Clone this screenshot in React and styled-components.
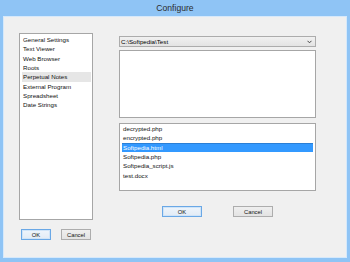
import React from "react";
import styled, { createGlobalStyle } from "styled-components";

const Global = createGlobalStyle`
  html, body { margin: 0; padding: 0; background: #8fc4f5; }
  body { font-family: "Liberation Sans", Arial, sans-serif; }
  * { box-sizing: border-box; }
`;

const Window = styled.div`
  width: 350px;
  height: 262px;
  display: flex;
  flex-direction: column;
  background: #8fc4f5;
  padding: 0 4px 5px 4px;
`;

const TitleBar = styled.div`
  height: 17px;
  flex: none;
  display: flex;
  align-items: center;
  justify-content: center;
  font-size: 8.6px;
  color: #2b2b2b;
  padding-bottom: 1px;
`;

const Content = styled.div`
  flex: 1;
  background: #f0f0f0;
  box-shadow: 0 0 0 1px #d6e9fb;
  display: flex;
  padding: 16px 0 0 15px;
  font-size: 6.2px;
  color: #000;
`;

const LeftCol = styled.div`
  width: 74px;
  display: flex;
  flex-direction: column;
  gap: 9px;
`;

const ListBox = styled.div`
  background: #fff;
  border: 1px solid #a6a6a6;
  height: ${(p) => p.$h}px;
  padding: ${(p) => p.$pad};
  overflow: hidden;
`;

const Item = styled.div`
  height: 9.33px;
  line-height: 9.33px;
  padding-left: 1px;
  white-space: nowrap;
  background: ${(p) => (p.$sel === "active" ? "#3399ff" : p.$sel === "inactive" ? "#e6e6e6" : "transparent")};
  color: ${(p) => (p.$sel === "active" ? "#fff" : "#111")};
  box-shadow: ${(p) => (p.$sel === "active" ? "inset 0 1px 0 #2a7fd6" : "none")};
`;

const ButtonRow = styled.div`
  display: flex;
  gap: ${(p) => p.$gap}px;
  padding-left: ${(p) => p.$left}px;
`;

const Button = styled.div`
  width: 30px;
  height: 11px;
  display: flex;
  align-items: center;
  justify-content: center;
  font-size: 5.8px;
  color: #111;
  border: 1px solid ${(p) => (p.$default ? "#6aa8e6" : "#adadad")};
  background: ${(p) =>
    p.$default
      ? "linear-gradient(#eef5fc, #e2ebf5)"
      : "linear-gradient(#efefef, #e3e3e3)"};
  box-shadow: ${(p) => (p.$default ? "inset 0 0 0 1px #cfe4f8" : "none")};
`;

const WideButton = styled(Button)`
  width: 40px;
`;

const RightCol = styled.div`
  width: 197px;
  margin-left: 26px;
  display: flex;
  flex-direction: column;
  padding-top: 3px;
`;

const Combo = styled.div`
  height: 11px;
  border: 1px solid #acacac;
  background: linear-gradient(#f1f1f1, #e3e3e3);
  display: flex;
  align-items: center;
  justify-content: space-between;
  padding: 0 3px 0 1px;
  margin-bottom: 3px;
`;

const Memo = styled.div`
  height: 68px;
  background: #fff;
  border: 1px solid #a6a6a6;
  margin-bottom: 5px;
`;

const FileList = styled(ListBox)`
  margin-bottom: 15px;
`;

const leftItems = [
  "General Settings",
  "Text Viewer",
  "Web Browser",
  "Roots",
  "Perpetual Notes",
  "External Program",
  "Spreadsheet",
  "Date Strings",
];

const files = [
  "decrypted.php",
  "encrypted.php",
  "Softpedia.html",
  "Softpedia.php",
  "Softpedia_script.js",
  "test.docx",
];

export default function App() {
  return (
    <>
      <Global />
      <Window>
        <TitleBar>Configure</TitleBar>
        <Content>
          <LeftCol>
            <ListBox $h={187} $pad="1px 1px 0 2px">
              {leftItems.map((t, i) => (
                <Item key={t} $sel={i === 4 ? "inactive" : undefined}>
                  {t}
                </Item>
              ))}
            </ListBox>
            <ButtonRow $gap={10} $left={2}>
              <Button $default>OK</Button>
              <Button>Cancel</Button>
            </ButtonRow>
          </LeftCol>
          <RightCol>
            <Combo>
              <span>C:\Softpedia\Test</span>
              <svg width="5" height="4" viewBox="0 0 5 4">
                <path d="M0.5 0.8 L2.5 2.8 L4.5 0.8" fill="none" stroke="#444" strokeWidth="1" />
              </svg>
            </Combo>
            <Memo />
            <FileList $h={68} $pad="0 2px 0 2px">
              {files.map((t, i) => (
                <Item key={t} $sel={i === 2 ? "active" : undefined}>
                  {t}
                </Item>
              ))}
            </FileList>
            <ButtonRow $gap={31} $left={43}>
              <WideButton $default>OK</WideButton>
              <WideButton>Cancel</WideButton>
            </ButtonRow>
          </RightCol>
        </Content>
      </Window>
    </>
  );
}
